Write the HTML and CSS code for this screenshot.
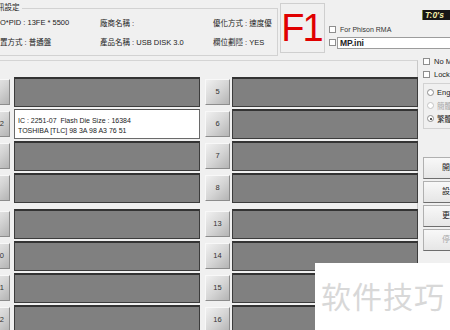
FILE: index.html
```html
<!DOCTYPE html>
<html>
<head>
<meta charset="utf-8">
<link rel="stylesheet" href="styles.css">
</head>
<body>
<div class="screen">
  <div class="top">
    <div class="info">
      <div class="legend">訊設定</div>
      <div class="info-grid">
        <span>O*PID : 13FE * 5500</span><span>廠商名稱 :</span><span>優化方式 : 速度優</span>
        <span>置方式 : 普通盤</span><span>產品名稱 : USB DISK 3.0</span><span>欄位劃隱 : YES</span>
      </div>
    </div>
    <div class="f1">F1</div>
    <div class="rt">
      <div class="tbox">T:0's</div>
      <div class="chk rma"><span class="box"></span><span>For Phison RMA</span></div>
      <div class="mp"><span class="box"></span><div class="field">MP.ini</div></div>
    </div>
  </div>
  <div class="main">
    <div class="panel">
      <div class="group">
        <div class="row"><div class="btn lb">1</div><div class="slot"></div><div class="btn">5</div><div class="slot"></div></div>
        <div class="row"><div class="btn lb shown">2</div><div class="slot info-slot"><div>IC : 2251-07&nbsp; Flash Die Size : 16384</div><div>TOSHIBA [TLC] 98 3A 98 A3 76 51</div></div><div class="btn">6</div><div class="slot"></div></div>
        <div class="row"><div class="btn lb">3</div><div class="slot"></div><div class="btn">7</div><div class="slot"></div></div>
        <div class="row"><div class="btn lb">4</div><div class="slot"></div><div class="btn">8</div><div class="slot"></div></div>
      </div>
      <div class="group">
        <div class="row"><div class="btn lb">9</div><div class="slot"></div><div class="btn">13</div><div class="slot"></div></div>
        <div class="row"><div class="btn lb shown">10</div><div class="slot"></div><div class="btn">14</div><div class="slot"></div></div>
        <div class="row"><div class="btn lb shown">11</div><div class="slot"></div><div class="btn">15</div><div class="slot"></div></div>
        <div class="row"><div class="btn lb shown">12</div><div class="slot"></div><div class="btn">16</div><div class="slot"></div></div>
      </div>
    </div>
    <div class="side">
      <div class="chk nom"><span class="box"></span><span>No MP</span></div>
      <div class="chk lock"><span class="box"></span><span>Lock</span></div>
      <div class="radios">
        <div class="radio"><span class="dot"></span><span>English</span></div>
        <div class="radio disabled"><span class="dot"></span><span>簡體中文</span></div>
        <div class="radio on"><span class="dot"></span><span>繁體中文</span></div>
      </div>
      <div class="actions">
        <div class="act">開始</div>
        <div class="act">設定</div>
        <div class="act">更新</div>
        <div class="act disabled">停止</div>
      </div>
    </div>
  </div>
  <div class="watermark">软件技巧</div>
</div>
</body>
</html>
```
FILE: styles.css
```css
* { box-sizing: border-box; }
html, body { margin: 0; padding: 0; }
body {
  background: #f0f0f0;
  font-family: "Liberation Sans", "Noto Sans CJK TC", sans-serif;
  font-size: 7.5px;
  color: #222;
  width: 450px;
  height: 330px;
  overflow: hidden;
}
.screen { position: relative; width: 450px; height: 330px; overflow: hidden; }

/* top */
.top { display: flex; align-items: flex-start; height: 58px; }
.info {
  flex: none;
  width: 288px;
  height: 48px;
  margin: 8px 0 0 -10px;
  border: 1px solid #d2d2d2;
}
.legend {
  width: fit-content;
  margin: -6px 0 0 4px;
  padding: 0 2px;
  height: 10px;
  line-height: 10px;
  background: #f0f0f0;
  overflow: hidden;
}
.info-grid {
  display: grid;
  grid-template-columns: 100px 113px 1fr;
  grid-auto-rows: 19px;
  align-items: center;
  margin-top: 0;
  padding-left: 9px;
  white-space: nowrap;
}
.f1 {
  flex: none;
  width: 45px;
  height: 50px;
  margin: 3px 0 0 2px;
  border: 1px solid #cfcfcf;
  color: #e00000;
  font-size: 38px;
  letter-spacing: -2px;
  line-height: 48px;
  text-align: center;
  padding-right: 2px;
}
.rt { flex: 1; display: flex; flex-direction: column; padding-left: 4px; }
.tbox {
  align-self: flex-end;
  margin-top: 10px;
  width: 28px;
  height: 10px;
  background: #161616;
  border-left: 1px solid #8a8a30;
  color: #f2eea8;
  font-weight: bold;
  font-style: italic;
  font-size: 8.5px;
  line-height: 10px;
  padding-left: 2px;
}
.chk { display: flex; align-items: center; gap: 4px; height: 8px; white-space: nowrap; }
.box {
  flex: none;
  width: 7px;
  height: 7px;
  background: #fff;
  border: 1px solid #8e8e8e;
}
.rma { margin-top: 5px; font-size: 7px; color: #333; }
.mp { display: flex; align-items: center; gap: 1px; margin-top: 4px; height: 11px; }
.field {
  flex: 1;
  height: 12px;
  background: #fff;
  border: 1px solid #9c9c9c;
  border-right: none;
  font-weight: bold;
  font-size: 8.5px;
  line-height: 10px;
  padding-left: 2px;
}

/* main */
.main { display: flex; }
.panel {
  flex: none;
  width: 438px;
  margin: 2px 0 0 -20px;
  padding: 16px 0 0 5px;
  border-top: 1px solid #d4d4d4;
  border-right: 1px solid #c8c8c8;
  display: flex;
  flex-direction: column;
  gap: 6px;
  height: 290px;
}
.group { display: flex; flex-direction: column; gap: 2px; }
.row { display: flex; align-items: center; height: 30px; }
.btn {
  flex: none;
  width: 25px;
  height: 26px;
  margin-left: 5px;
  background: linear-gradient(135deg, #f0f0f0 0%, #d6d6d6 50%, #b4b4b4 100%);
  border: 1px solid;
  border-color: #f8f8f8 #8c8c8c #8c8c8c #f8f8f8;
  color: #333;
  font-size: 7.5px;
  line-height: 24px;
  text-align: center;
  overflow: hidden;
}
.btn.lb { margin-left: 0; margin-right: 2px; padding-right: 3px; }
.btn.lb.shown { text-align: right; padding-right: 5px; }
.slot {
  flex: none;
  width: 186px;
  height: 30px;
  background: #808080;
  border: 1px solid #3c3c3c;
  border-top: 2px solid #333;
}
.btn + .slot { margin-left: 2px; }
.info-slot {
  background: #fff;
  border-color: #6a6a6a;
  border-top: 1px solid #555;
  padding: 6px 0 0 3px;
  font-size: 7px;
  line-height: 10px;
  color: #222;
  white-space: nowrap;
}

/* side */
.side { flex: 1; display: flex; flex-direction: column; padding-left: 5px; white-space: nowrap; overflow: hidden; }
.nom { margin-top: -1px; gap: 4px; }
.lock { margin-top: 5px; }
.radios {
  margin-top: 5px;
  height: 46px;
  border: 1px solid #d2d2d2;
  border-right: none;
  padding: 2px 0 0 3px;
}
.radio { display: flex; align-items: center; gap: 3px; height: 13px; }
.dot {
  flex: none;
  width: 7px;
  height: 7px;
  border-radius: 50%;
  background: #fff;
  border: 1px solid #8e8e8e;
  position: relative;
}
.radio.on .dot::after {
  content: "";
  position: absolute;
  left: 1.5px;
  top: 1.5px;
  width: 2px;
  height: 2px;
  border-radius: 50%;
  background: #222;
}
.radio.disabled { color: #a8a8a8; }
.radio.disabled .dot { border-color: #c4c4c4; }
.actions { margin-top: 28px; display: flex; flex-direction: column; gap: 2px; }
.act {
  height: 22px;
  width: 40px;
  background: linear-gradient(#f8f8f8, #e6e6e6);
  border: 1px solid #b0b0b0;
  border-bottom-color: #6e6e6e;
  border-right: none;
  padding-left: 18px;
  line-height: 20px;
  font-size: 8px;
  color: #222;
}
.act.disabled { color: #a8a8a8; }

/* watermark */
.watermark {
  position: absolute;
  left: 315px;
  top: 263px;
  width: 135px;
  height: 67px;
  background: #fff;
  color: #d8d8d8;
  font-family: "Noto Sans CJK SC", sans-serif;
  font-size: 30px;
  line-height: 30px;
  padding: 17px 0 0 6px;
  letter-spacing: 1px;
}
```
